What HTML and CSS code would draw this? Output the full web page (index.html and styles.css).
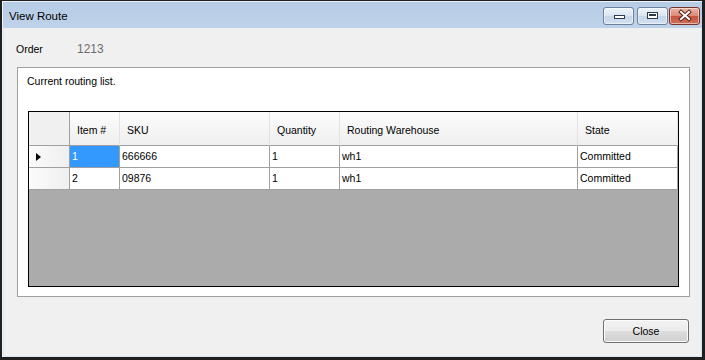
FILE: index.html
```html
<!DOCTYPE html>
<html lang="en">
<head>
    <meta charset="UTF-8">
    <title>View Route</title>
    <link rel="stylesheet" href="styles.css">
</head>
<body>

<div class="window">
    <div class="titlebar">
        <span class="title">View Route</span>
        <div class="caption-buttons">
            <span class="cap-btn">
                <svg width="29" height="16" viewBox="0 0 29 16"><rect x="10.5" y="7.5" width="10" height="3" fill="#fff" stroke="#2e3a48"/></svg>
            </span>
            <span class="cap-btn max">
                <svg width="29" height="16" viewBox="0 0 29 16"><rect x="9.5" y="4.5" width="10" height="6" fill="#fff" stroke="#2e3a48"/><rect x="11" y="6" width="7" height="2" fill="#2e3a48"/></svg>
            </span>
            <span class="cap-btn close">
                <svg width="29" height="16" viewBox="0 0 29 16"><path d="M11 4 L19 11 M19 4 L11 11" stroke="#5a2118" stroke-width="4" stroke-linecap="square"/><path d="M11 4 L19 11 M19 4 L11 11" stroke="#fff" stroke-width="2" stroke-linecap="square"/></svg>
            </span>
        </div>
    </div>

    <div class="client">
        <div class="order-row">
            <span class="order-label">Order</span>
            <span class="order-value">1213</span>
        </div>

        <div class="group">
            <div class="group-label">Current routing list.</div>
            <div class="grid">
                <div class="grid-row header">
                    <div class="cell corner"></div>
                    <div class="cell">Item #</div>
                    <div class="cell">SKU</div>
                    <div class="cell">Quantity</div>
                    <div class="cell">Routing Warehouse</div>
                    <div class="cell">State</div>
                </div>
                <div class="grid-row">
                    <div class="cell row-head"><span class="current-arrow"></span></div>
                    <div class="cell selected">1</div>
                    <div class="cell">666666</div>
                    <div class="cell">1</div>
                    <div class="cell">wh1</div>
                    <div class="cell">Committed</div>
                </div>
                <div class="grid-row">
                    <div class="cell row-head"></div>
                    <div class="cell">2</div>
                    <div class="cell">09876</div>
                    <div class="cell">1</div>
                    <div class="cell">wh1</div>
                    <div class="cell">Committed</div>
                </div>
            </div>
        </div>

        <button class="close-btn">Close</button>
    </div>
</div>

</body>
</html>
```

FILE: styles.css
```css
body {
    margin: 0;
    font-family: "Liberation Sans", Arial, sans-serif;
    font-size: 10.5px;
    color: #000;
}
.window {
    width: 705px;
    height: 360px;
    box-sizing: border-box;
    border-style: solid;
    border-color: #1f1f1f;
    border-width: 1px 3px 3px 2px;
    background: linear-gradient(#b6cce5, #c8daee 60px, #c8daee);
    box-shadow: inset 1px 1px 0 #eef4fb;
    display: flex;
    flex-direction: column;
}
.titlebar {
    height: 27px;
    flex-shrink: 0;
    display: flex;
    justify-content: space-between;
    align-items: flex-start;
    padding: 0 2px 0 7px;
}
.title {
    margin-top: 8px;
    font-size: 11.5px;
    line-height: 14px;
}
.caption-buttons {
    display: flex;
    margin-top: 6px;
}
.cap-btn {
    width: 31px;
    height: 18px;
    box-sizing: border-box;
    border: 1px solid #6c819c;
    border-radius: 3px;
    display: flex;
    background: linear-gradient(#eef4fa, #d9e5f2 50%, #c5d6ea 51%, #d3e1f1);
    box-shadow: inset 0 0 0 1px rgba(255, 255, 255, 0.5);
}
.cap-btn.max {
    margin-left: 3px;
}
.cap-btn.close {
    margin-left: 1px;
    border-color: #7a3328;
    background: linear-gradient(#ebb3a5, #da8a76 50%, #c5533c 51%, #d0705a);
}
.client {
    flex: 1;
    margin-left: 1px;
    background: #f0f0f0;
    border: 1px solid #dae6f3;
    border-top: none;
    display: flex;
    flex-direction: column;
    padding: 0 11px 0 12px;
}
.order-row {
    margin-top: 15px;
    height: 13px;
    line-height: 13px;
    display: flex;
}
.order-label {
    width: 61px;
}
.order-value {
    color: #6d6d6d;
    font-size: 12px;
}
.group {
    margin: 11px 0 0 1px;
    height: 230px;
    box-sizing: border-box;
    border: 1px solid #a0a0a0;
    background: #fff;
    padding: 7px 10px 0;
}
.group-label {
    line-height: 13px;
    margin-left: -1px;
}
.grid {
    margin-top: 23px;
    height: 176px;
    box-sizing: border-box;
    border: 1px solid #000;
    background: #ababab;
}
.grid-row {
    display: grid;
    grid-template-columns: 41px 50px 150px 70px 238px 100px;
    height: 22px;
}
.cell {
    box-sizing: border-box;
    border-right: 1px solid #a0a0a0;
    border-bottom: 1px solid #a0a0a0;
    background: #fff;
    padding-left: 2px;
    line-height: 21px;
    white-space: nowrap;
    overflow: hidden;
}
.grid-row.header {
    height: 34px;
}
.header .cell {
    background: linear-gradient(#fdfdfd, #f6f6f6 45%, #efefef);
    border-right-color: #e2e2e2;
    padding: 4px 0 0 7px;
    line-height: 29px;
}
.header .cell.corner {
    background: #f0f0f0;
    border-right-color: #a0a0a0;
}
.cell.row-head {
    background: linear-gradient(to right, #fbfbfb, #efefef);
    display: flex;
    align-items: center;
    padding-left: 7px;
    padding-top: 1px;
}
.current-arrow {
    width: 0;
    height: 0;
    border-left: 5px solid #000;
    border-top: 4px solid transparent;
    border-bottom: 4px solid transparent;
}
.cell.selected {
    background: #3399ff;
    color: #fff;
}
.close-btn {
    margin: 22px 1px 0 0;
    align-self: flex-end;
    width: 86px;
    height: 24px;
    border: 1px solid #707070;
    border-radius: 3px;
    background: linear-gradient(#f2f2f2, #ebebeb 50%, #dddddd 51%, #cfcfcf);
    box-shadow: inset 0 0 0 1px #fbfbfb;
    font-family: "Liberation Sans", Arial, sans-serif;
    font-size: 10.5px;
    color: #000;
    padding: 0;
}
```
